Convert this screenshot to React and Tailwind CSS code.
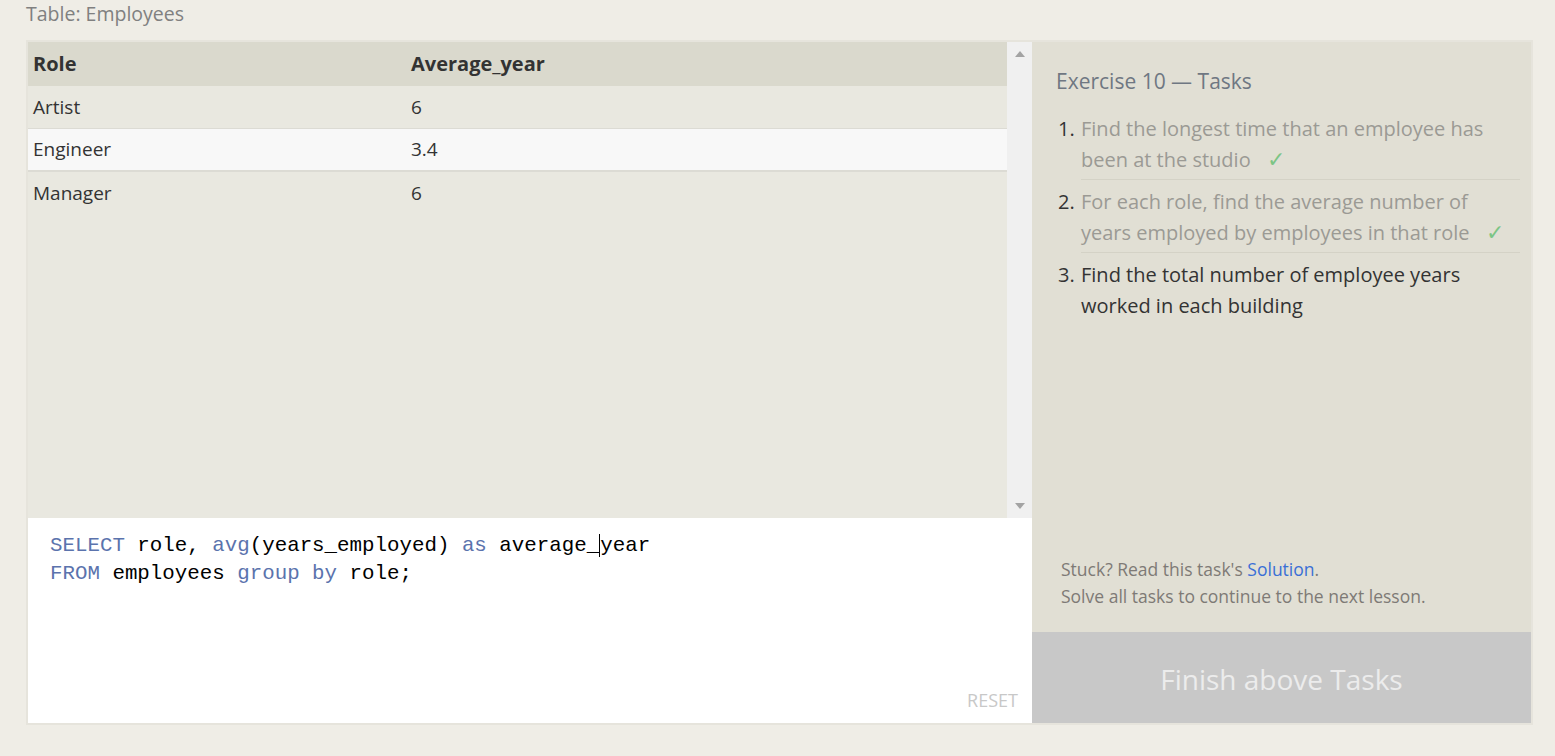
import React from 'react'

const rows = [
  { role: 'Artist', avg: '6' },
  { role: 'Engineer', avg: '3.4', hl: true },
  { role: 'Manager', avg: '6', last: true },
]

const tasks = [
  { n: 1, text: 'Find the longest time that an employee has been at the studio', done: true },
  { n: 2, text: 'For each role, find the average number of years employed by employees in that role', done: true },
  { n: 3, text: 'Find the total number of employee years worked in each building', done: false },
]

export default function App() {
  return (
    <div className="min-h-[756px] bg-[#efede6] pl-[26px] pr-[22px] font-['Open_Sans',sans-serif]">
      <div className="h-[40px] pt-[1px] text-[19.5px] leading-[26px] text-[#808080]">Table: Employees</div>

      <div className="flex h-[685px] border-2 border-[#e6e4dc]">
        {/* left: results + editor */}
        <div className="flex w-[1004px] flex-col">
          <div className="flex h-[476px]">
            <div className="flex-1 bg-[#e9e8e0]">
              <div className="flex h-[44px] items-center bg-[#dad9cd] text-[20px] font-bold text-[#333]">
                <div className="w-[383px] pl-[5px]">Role</div>
                <div>Average_year</div>
              </div>
              {rows.map((r) => (
                <div
                  key={r.role}
                  className={`flex h-[43px] items-center text-[19px] text-[#333] ${r.hl ? 'border-b-2 border-[#dcdbd4] bg-[#f8f8f8]' : r.last ? '' : 'border-b border-[#dcdbd4]'}`}
                >
                  <div className="w-[383px] pl-[5px]">{r.role}</div>
                  <div>{r.avg}</div>
                </div>
              ))}
            </div>
            <div className="flex w-[25px] flex-col items-center justify-between bg-[#f0f0f0] py-[9px]">
              <svg width="10" height="6" viewBox="0 0 10 6"><path d="M5 0 L10 6 L0 6 Z" fill="#a3a3a3" /></svg>
              <svg width="10" height="6" viewBox="0 0 10 6"><path d="M0 0 L10 0 L5 6 Z" fill="#a3a3a3" /></svg>
            </div>
          </div>
          <div className="relative flex-1 bg-white px-[22px] pt-[14px] font-['Liberation_Mono',monospace] text-[20.8px] leading-[28px] text-black">
            <div className="whitespace-pre">
              <span className="text-[#5b73ad]">SELECT</span> role, <span className="text-[#5b73ad]">avg</span>(years_employed) <span className="text-[#5b73ad]">as</span> average_<span className="border-l border-black">y</span>ear
            </div>
            <div className="whitespace-pre">
              <span className="text-[#5b73ad]">FROM</span> employees <span className="text-[#5b73ad]">group</span> <span className="text-[#5b73ad]">by</span> role;
            </div>
            <div className="absolute right-[14px] bottom-[9px] font-['Open_Sans',sans-serif] text-[18px] text-[#c8c8c8]">RESET</div>
          </div>
        </div>

        {/* right: tasks */}
        <div className="flex flex-1 flex-col bg-[#e1dfd4]">
          <div className="flex flex-1 flex-col pl-[24px] pr-[11px] pt-[25px]">
            <div className="text-[21px] leading-[28px] text-[#6f7782]">Exercise 10 — Tasks</div>
            <ol className="mt-[18px]">
              {tasks.map((t, i) => (
                <li key={t.n} className="flex text-[20px] leading-[31px]">
                  <span className="w-[25px] pl-[2px] text-[#333]">{t.n}.</span>
                  <span className={`flex-1 ${i < tasks.length - 1 ? 'mb-[6px] border-b border-[#d4d2c6] pb-[4px]' : ''} ${t.done ? 'text-[#9b9a94]' : 'text-[#333]'}`}>
                    {t.text}
                    {t.done && <span className="ml-[16px] inline-block text-[22px] leading-[20px] text-[#7cc585]">✓</span>}
                  </span>
                </li>
              ))}
            </ol>
            <div className="mt-auto pb-[22px] pl-[5px] text-[17.5px] leading-[27px] text-[#7e7a76]">
              <div>Stuck? Read this task's <span className="text-[#3a6fd6]">Solution</span>.</div>
              <div>Solve all tasks to continue to the next lesson.</div>
            </div>
          </div>
          <div className="flex h-[91px] items-center justify-center bg-[#c8c8c8] pt-[2px] text-[28px] text-[#ececec]">
            Finish above Tasks
          </div>
        </div>
      </div>
    </div>
  )
}
